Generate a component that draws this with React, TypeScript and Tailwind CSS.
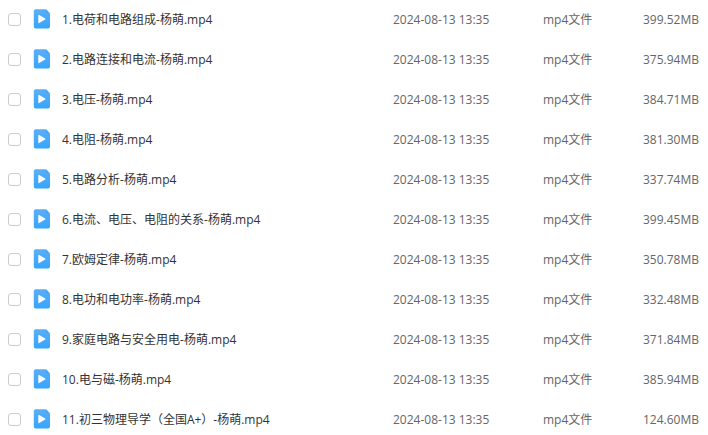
type VideoFile = {
  name: string;
  date: string;
  size: string;
};

const files: VideoFile[] = [
  { name: "1.电荷和电路组成-杨萌.mp4", date: "2024-08-13 13:35", size: "399.52MB" },
  { name: "2.电路连接和电流-杨萌.mp4", date: "2024-08-13 13:35", size: "375.94MB" },
  { name: "3.电压-杨萌.mp4", date: "2024-08-13 13:35", size: "384.71MB" },
  { name: "4.电阻-杨萌.mp4", date: "2024-08-13 13:35", size: "381.30MB" },
  { name: "5.电路分析-杨萌.mp4", date: "2024-08-13 13:35", size: "337.74MB" },
  { name: "6.电流、电压、电阻的关系-杨萌.mp4", date: "2024-08-13 13:35", size: "399.45MB" },
  { name: "7.欧姆定律-杨萌.mp4", date: "2024-08-13 13:35", size: "350.78MB" },
  { name: "8.电功和电功率-杨萌.mp4", date: "2024-08-13 13:35", size: "332.48MB" },
  { name: "9.家庭电路与安全用电-杨萌.mp4", date: "2024-08-13 13:35", size: "371.84MB" },
  { name: "10.电与磁-杨萌.mp4", date: "2024-08-13 13:35", size: "385.94MB" },
  { name: "11.初三物理导学（全国A+）-杨萌.mp4", date: "2024-08-13 13:35", size: "124.60MB" },
];

function VideoIcon() {
  return (
    <svg width="17" height="20" viewBox="0 0 17 20" className="mb-0.5 shrink-0" aria-hidden="true">
      <defs>
        <linearGradient id="video-fill" x1="0" y1="0" x2="0" y2="1">
          <stop offset="0" stopColor="#5aaef8" />
          <stop offset="1" stopColor="#36a5fd" />
        </linearGradient>
      </defs>
      <path
        d="M2.600.2h9.700c.5 0 .9.2 1.200.5l3 3.300c.3.300.5.700.5 1.100v12.600a1.800 1.800 0 0 1-1.800 1.800H2.600A1.800 1.800 0 0 1 .8 17.700V2A1.800 1.800 0 0 1 2.600.2z"
        fill="url(#video-fill)"
      />
      <path d="M12.800.3c.3.100.5.200.7.400l3 3.300c.2.200.3.400.4.600h-2.600a1.500 1.500 0 0 1-1.500-1.500z" fill="#4da3f3" />
      <path d="M5.300 6.600v7c0 .5.500.8.900.5l6-3.500c.4-.2.4-.8 0-1l-6-3.500c-.4-.3-.9 0-.9.500z" fill="#fff" />
    </svg>
  );
}

function FileRow({ file, id }: { file: VideoFile; id: string }) {
  return (
    <tr className="h-10">
      <td className="pb-px pl-2">
        <input
          type="checkbox"
          id={id}
          className="block size-[13px] appearance-none rounded-[3px] border border-[#cccccc] bg-white checked:bg-[#36a5fd]"
        />
      </td>
      <td>
        <label htmlFor={id} className="flex items-center gap-3 text-[#333333]">
          <VideoIcon />
          {file.name}
        </label>
      </td>
      <td>{file.date}</td>
      <td>mp4文件</td>
      <td>{file.size}</td>
    </tr>
  );
}

export default function App() {
  return (
    <main className="h-screen overflow-hidden bg-white font-['Open_Sans','Noto_Sans_CJK_SC',sans-serif] text-xs text-[#666666]">
      <table className="w-full table-fixed border-collapse whitespace-nowrap">
        <colgroup>
          <col className="w-[33px]" />
          <col />
          <col className="w-[150px]" />
          <col className="w-[100px]" />
          <col className="w-[65px]" />
        </colgroup>
        <tbody>
          {files.map((file, i) => (
            <FileRow key={file.name} file={file} id={`file-${i + 1}`} />
          ))}
        </tbody>
      </table>
    </main>
  );
}
